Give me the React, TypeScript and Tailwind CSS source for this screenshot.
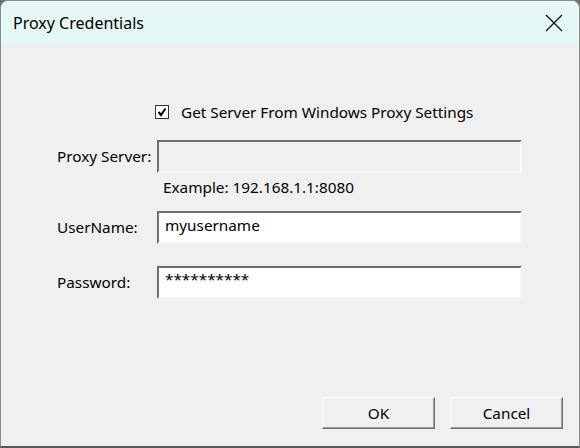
export default function App() {
  const font = { fontFamily: '"Noto Sans", "Open Sans", sans-serif' };
  return (
    <div className="w-[580px] h-[448px] bg-[#6e6e6e] p-0" style={font}>
      <div className="w-[580px] h-[448px] rounded-t-[8px] border border-[#8a8a8a] border-b-2 border-b-[#5a5a5a] bg-[#f0f0f0] flex flex-col overflow-hidden text-[15.3px] text-black">
        <div className="h-[43px] bg-[#e6f8f5] flex items-center justify-between pl-[12px] pr-[16px] shrink-0">
          <span className="text-[16px]">Proxy Credentials</span>
          <svg width="18" height="18" viewBox="0 0 18 18"><path d="M1 1 L17 17 M17 1 L1 17" stroke="#111" strokeWidth="1.3" /></svg>
        </div>
        <div className="flex-1 flex flex-col relative">
          <div className="flex items-center mt-[57px] ml-[154px] gap-[12px]">
            <div className="w-[14px] h-[14px] bg-white border border-[#333] flex items-center justify-center">
              <svg width="10" height="10" viewBox="0 0 10 10"><path d="M1.5 5 L4 8 L8.5 1.5" stroke="#000" strokeWidth="2" fill="none" /></svg>
            </div>
            <span>Get Server From Windows Proxy Settings</span>
          </div>
          <div className="flex items-center mt-[16px] ml-[56px]">
            <span className="w-[100px]">Proxy Server:</span>
            <div className="w-[365px] h-[33px] bg-[#f0f0f0] border-2 border-t-[#6e6e6e] border-l-[#6e6e6e] border-b-[#fafafa] border-r-[#fafafa]" />
          </div>
          <div className="ml-[162px] mt-[3px]">Example: 192.168.1.1:8080</div>
          <div className="flex items-center mt-[12px] ml-[56px]">
            <span className="w-[100px]">UserName:</span>
            <div className="w-[365px] h-[33px] bg-white border-2 border-t-[#6e6e6e] border-l-[#6e6e6e] border-b-[#f5f5f5] border-r-[#f5f5f5] px-[6px] leading-[24px]">myusername</div>
          </div>
          <div className="flex items-center mt-[22px] ml-[56px]">
            <span className="w-[100px]">Password:</span>
            <div className="w-[365px] h-[33px] bg-white border-2 border-t-[#6e6e6e] border-l-[#6e6e6e] border-b-[#f5f5f5] border-r-[#f5f5f5] px-[6px] leading-[22px]">**********</div>
          </div>
          <div className="flex justify-end gap-[15px] mr-[16px] mt-auto mb-[17px]">
            <div className="w-[113px] h-[32px] bg-[#f0f0f0] border border-t-white border-l-white border-b-[#6e6e6e] border-r-[#6e6e6e] shadow-[inset_-1px_-1px_0_#a0a0a0] flex items-center justify-center">OK</div>
            <div className="w-[113px] h-[32px] bg-[#f0f0f0] border border-t-white border-l-white border-b-[#6e6e6e] border-r-[#6e6e6e] shadow-[inset_-1px_-1px_0_#a0a0a0] flex items-center justify-center">Cancel</div>
          </div>
        </div>
      </div>
    </div>
  );
}
